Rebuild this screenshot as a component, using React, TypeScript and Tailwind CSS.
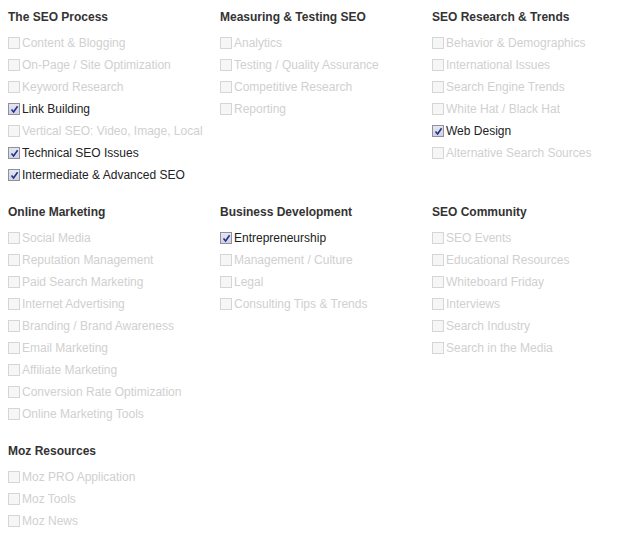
type Item = { label: string; checked?: boolean };
type Group = { title: string; items: Item[] };

const ROWS: Group[][] = [
  [
    {
      title: 'The SEO Process',
      items: [
        { label: 'Content & Blogging' },
        { label: 'On-Page / Site Optimization' },
        { label: 'Keyword Research' },
        { label: 'Link Building', checked: true },
        { label: 'Vertical SEO: Video, Image, Local' },
        { label: 'Technical SEO Issues', checked: true },
        { label: 'Intermediate & Advanced SEO', checked: true },
      ],
    },
    {
      title: 'Measuring & Testing SEO',
      items: [
        { label: 'Analytics' },
        { label: 'Testing / Quality Assurance' },
        { label: 'Competitive Research' },
        { label: 'Reporting' },
      ],
    },
    {
      title: 'SEO Research & Trends',
      items: [
        { label: 'Behavior & Demographics' },
        { label: 'International Issues' },
        { label: 'Search Engine Trends' },
        { label: 'White Hat / Black Hat' },
        { label: 'Web Design', checked: true },
        { label: 'Alternative Search Sources' },
      ],
    },
  ],
  [
    {
      title: 'Online Marketing',
      items: [
        { label: 'Social Media' },
        { label: 'Reputation Management' },
        { label: 'Paid Search Marketing' },
        { label: 'Internet Advertising' },
        { label: 'Branding / Brand Awareness' },
        { label: 'Email Marketing' },
        { label: 'Affiliate Marketing' },
        { label: 'Conversion Rate Optimization' },
        { label: 'Online Marketing Tools' },
      ],
    },
    {
      title: 'Business Development',
      items: [
        { label: 'Entrepreneurship', checked: true },
        { label: 'Management / Culture' },
        { label: 'Legal' },
        { label: 'Consulting Tips & Trends' },
      ],
    },
    {
      title: 'SEO Community',
      items: [
        { label: 'SEO Events' },
        { label: 'Educational Resources' },
        { label: 'Whiteboard Friday' },
        { label: 'Interviews' },
        { label: 'Search Industry' },
        { label: 'Search in the Media' },
      ],
    },
  ],
  [
    {
      title: 'Moz Resources',
      items: [{ label: 'Moz PRO Application' }, { label: 'Moz Tools' }, { label: 'Moz News' }],
    },
  ],
];

const Box = ({ checked }: { checked?: boolean }) =>
  checked ? (
    <span className="flex h-[12px] w-[12px] shrink-0 items-center justify-center border border-[#8f8f9d] bg-gradient-to-b from-[#e4e6f0] to-[#cfd3e3]">
      <svg width="9" height="9" viewBox="0 0 9 9">
        <path d="M1.5 4.5 L3.6 7 L7.6 1.2" fill="none" stroke="#22308a" strokeWidth="1.6" />
      </svg>
    </span>
  ) : (
    <span className="h-[12px] w-[12px] shrink-0 border border-[#d6d6d6] bg-[#f6f6f6]" />
  );

const App = () => {
  return (
    <div className="min-h-screen bg-white px-[8px] pt-[9px] font-['Liberation_Sans',Arial,sans-serif] text-[12px]">
      {ROWS.map((row, r) => (
        <div key={r} className="mb-[18px] grid grid-cols-[212px_212px_192px]">
          {row.map((group) => (
            <div key={group.title}>
              <h3 className="mb-[7px] text-[12px] font-bold leading-[16px] text-[#333]">{group.title}</h3>
              <ul>
                {group.items.map((item) => (
                  <li key={item.label} className="flex h-[22px] items-center gap-[2px]">
                    <Box checked={item.checked} />
                    <span className={item.checked ? 'text-[#222]' : 'text-[#d0d0d0]'}>{item.label}</span>
                  </li>
                ))}
              </ul>
            </div>
          ))}
        </div>
      ))}
    </div>
  );
};

export default App;
